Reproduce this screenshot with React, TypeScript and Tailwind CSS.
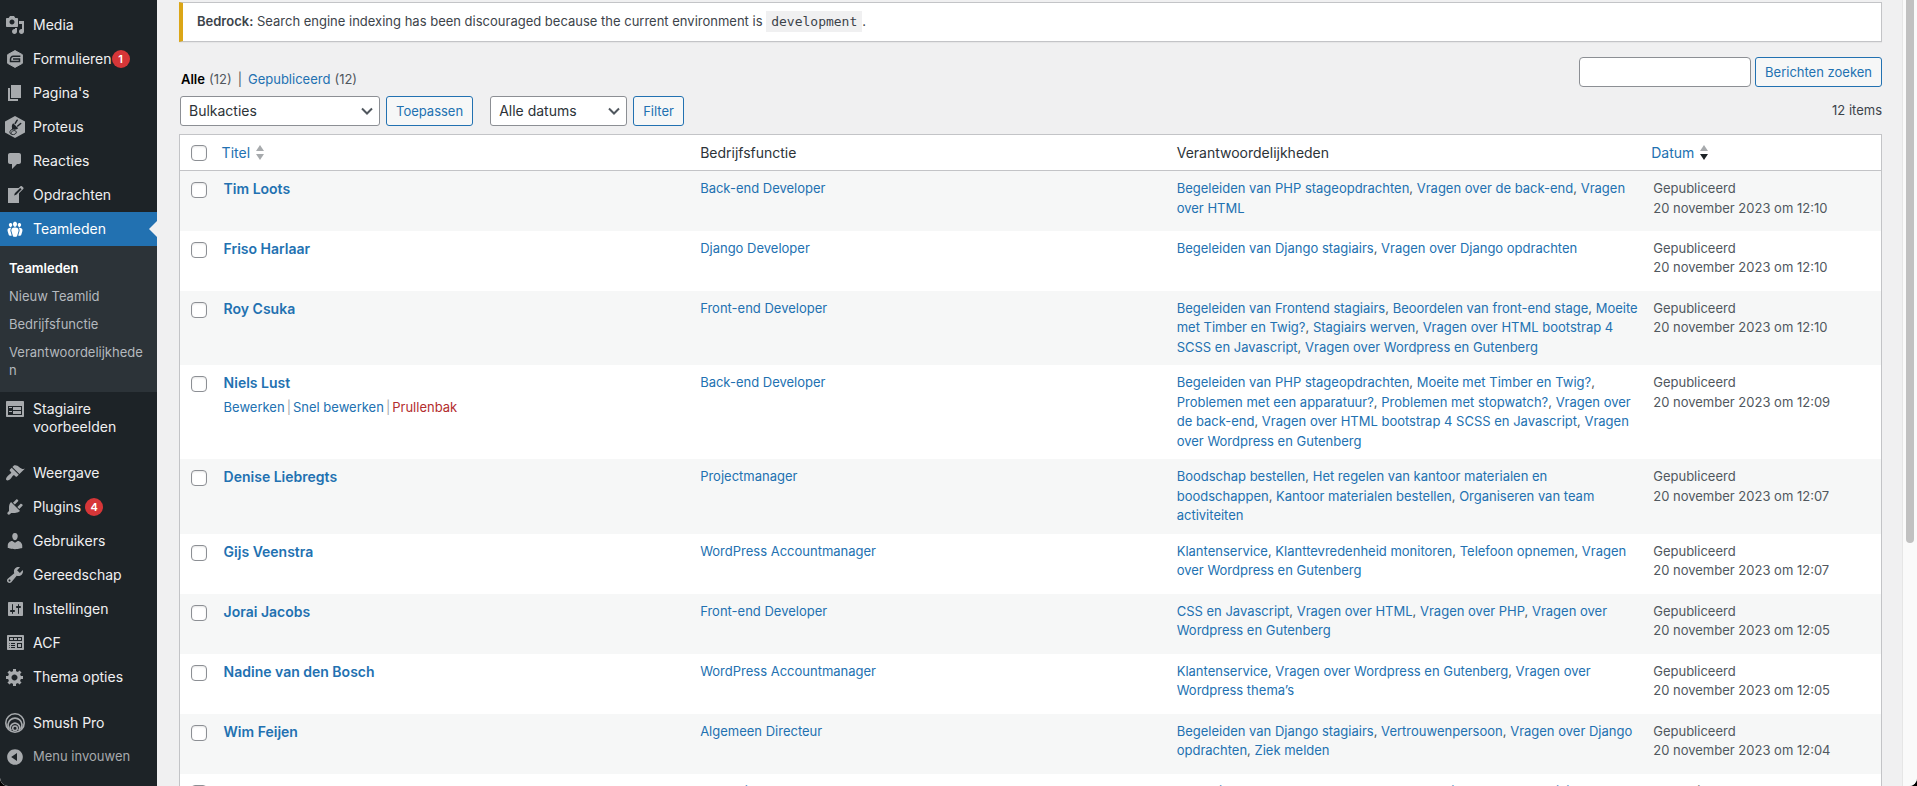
import type { ReactNode } from 'react';

const icons = {
  media:
    'M13 11V4c0-.55-.45-1-1-1h-1.67L9 1H5L3.67 3H2c-.55 0-1 .45-1 1v7c0 .55.45 1 1 1h10c.55 0 1-.45 1-1zM7 4.5c1.38 0 2.5 1.12 2.5 2.5S8.38 9.5 7 9.5 4.5 8.38 4.5 7 5.62 4.5 7 4.5zM14 6h5v10.5c0 1.38-1.12 2.5-2.5 2.5S14 17.88 14 16.5s1.12-2.5 2.5-2.5c.17 0 .34.02.5.05V9h-3V6zm-4 8.05V13h2v3.5c0 1.38-1.12 2.5-2.5 2.5S7 17.88 7 16.5 8.12 14 9.5 14c.17 0 .34.02.5.05z',
  page: 'M6 15V2h10v13H6zm-1 1h8v2H3V5h2v11z',
  comments:
    'M5 2h9c1.1 0 2 .9 2 2v7c0 1.1-.9 2-2 2h-2l-5 5v-5H5c-1.1 0-2-.9-2-2V4c0-1.1.9-2 2-2z',
  write:
    'M16.89 1.2l1.41 1.41c.39.39.39 1.02 0 1.41L14 8.33V18H3V3h10.67l1.8-1.8c.4-.39 1.03-.4 1.42 0zm-5.66 8.48l5.37-5.36-1.42-1.42-5.36 5.37-.71 2.12z',
  groups:
    'M8.03 4.46c-.29 1.28.55 3.46 1.97 3.46 1.41 0 2.25-2.18 1.96-3.46-.22-.98-1.08-1.63-1.96-1.63-.89 0-1.74.65-1.97 1.63zm-4.13.9c-.25 1.08.47 2.93 1.67 2.93s1.92-1.85 1.67-2.93c-.19-.83-.92-1.39-1.67-1.39s-1.48.56-1.67 1.39zm8.86 0c-.25 1.08.47 2.93 1.66 2.93 1.2 0 1.92-1.85 1.67-2.93-.19-.83-.92-1.39-1.67-1.39-.74 0-1.47.56-1.66 1.39zm-.59 11.43l1.25-4.3C14.2 10 12.71 8.47 10 8.47c-2.72 0-4.21 1.53-3.44 4.02l1.26 4.3C8.05 17.51 9 18 10 18c.98 0 1.94-.49 2.17-1.21zm-6.1-7.63c-.49.67-.96 1.83-.42 3.59l1.12 3.79c-.34.2-.77.31-1.2.31-.85 0-1.65-.41-1.85-1.03l-1.07-3.65c-.65-2.11.61-3.4 2.92-3.4.27 0 .54.02.79.06-.1.1-.2.22-.29.33zm8.35-.39c2.31 0 3.58 1.29 2.92 3.4l-1.07 3.65c-.2.62-1 1.03-1.85 1.03-.43 0-.86-.11-1.2-.31l1.11-3.77c.55-1.78.08-2.94-.42-3.61-.08-.11-.18-.23-.28-.33.25-.04.51-.06.79-.06z',
  feedback:
    'M2 2h16c.55 0 1 .45 1 1v14c0 .55-.45 1-1 1H2c-.55 0-1-.45-1-1V3c0-.55.45-1 1-1zm15 14V7H3v9h14zM4 8v1h3V8H4zm4 0v3h8V8H8zm-4 4v1h3v-1H4zm4 0v3h8v-3H8z',
  appearance:
    'M14.48 11.06L7.41 3.99l1.5-1.5c.5-.56 2.3-.47 3.51.32 1.21.8 1.43 1.28 2.91 2.1 1.18.64 2.45 1.26 4.45.85zm-.71.71L6.7 4.7 4.93 6.47c-.39.39-.39 1.02 0 1.41l1.06 1.06c.39.39.39 1.03 0 1.42-.6.6-1.43 1.11-2.21 1.69-.35.26-.7.53-1.01.84C1.43 14.23.4 16.08 1.4 17.07c.99 1 2.84-.03 4.18-1.36.31-.31.58-.66.85-1.02.57-.78 1.08-1.61 1.69-2.21.39-.39 1.02-.39 1.41 0l1.06 1.06c.39.39 1.02.39 1.41 0z',
  plugins:
    'M13.11 4.36L9.87 7.6 8 5.73l3.24-3.24c.35-.34 1.05-.2 1.56.32.52.51.66 1.21.31 1.55zm-8 1.77l.91-1.12 9.01 9.01-1.19.84c-.71.71-2.63 1.16-3.82 1.16H6.14L4.9 17.26c-.59.59-1.54.59-2.12 0-.59-.58-.59-1.53 0-2.12l1.24-1.24v-3.88c0-1.13.4-3.19 1.09-3.89zm7.26 3.97l3.24-3.24c.34-.35 1.04-.21 1.55.31.52.51.66 1.21.31 1.55l-3.24 3.25z',
  users:
    'M10 9.25c-2.27 0-2.73-3.44-2.73-3.44C7 4.02 7.82 2 9.97 2c2.16 0 2.98 2.02 2.71 3.81 0 0-.41 3.44-2.68 3.44zm0 2.57L12.72 10c2.39 0 4.52 2.33 4.52 4.53v2.49s-3.65 1.13-7.24 1.13c-3.65 0-7.24-1.13-7.24-1.13v-2.49c0-2.25 1.94-4.48 4.47-4.48z',
  tools:
    'M16.68 9.77c-1.34 1.34-3.3 1.67-4.95.99l-5.41 6.52c-.99.99-2.59.99-3.58 0s-.99-2.59 0-3.57l6.52-5.42c-.68-1.65-.35-3.61.99-4.95 1.28-1.28 3.12-1.62 4.72-1.06l-2.89 2.89 2.82 2.82 2.86-2.87c.53 1.58.18 3.39-1.08 4.65zM3.81 16.21c.4.39 1.04.39 1.43 0 .4-.4.4-1.04 0-1.43-.39-.4-1.03-.4-1.43 0-.39.39-.39 1.03 0 1.43z',
  settings:
    'M18 16V4c0-.55-.45-1-1-1H4c-.55 0-1 .45-1 1v12c0 .55.45 1 1 1h13c.55 0 1-.45 1-1zM8 11h1c.55 0 1 .45 1 1s-.45 1-1 1H8v1.5c0 .28-.22.5-.5.5s-.5-.22-.5-.5V13H6c-.55 0-1-.45-1-1s.45-1 1-1h1V5.5c0-.28.22-.5.5-.5s.5.22.5.5V11zm5-2h-1c-.55 0-1-.45-1-1s.45-1 1-1h1V5.5c0-.28.22-.5.5-.5s.5.22.5.5V7h1c.55 0 1 .45 1 1s-.45 1-1 1h-1v5.5c0 .28-.22.5-.5.5s-.5-.22-.5-.5V9z',
  widgets:
    'M19 16V3c0-.55-.45-1-1-1H3c-.55 0-1 .45-1 1v13c0 .55.45 1 1 1h15c.55 0 1-.45 1-1zM4 4h13v4H4V4zm1 1v2h3V5H5zm4 0v2h3V5H9zm4 0v2h3V5h-3zm-8.5 5c.28 0 .5.22.5.5s-.22.5-.5.5-.5-.22-.5-.5.22-.5.5-.5zM6 10h4v1H6v-1zm6 0h5v5h-5v-5zm-7.5 2c.28 0 .5.22.5.5s-.22.5-.5.5-.5-.22-.5-.5.22-.5.5-.5zM6 12h4v1H6v-1zm7-1v3h3v-3h-3zm-8.5 3c.28 0 .5.22.5.5s-.22.5-.5.5-.5-.22-.5-.5.22-.5.5-.5zM6 14h4v1H6v-1z',
  generic:
    'M18 12h-2.18c-.17.7-.44 1.35-.81 1.93l1.54 1.54-2.1 2.1-1.54-1.54c-.58.36-1.23.63-1.91.79V19H8v-2.18c-.68-.16-1.33-.43-1.91-.79l-1.54 1.54-2.12-2.12 1.54-1.54c-.36-.58-.63-1.23-.79-1.91H1V9.03h2.17c.16-.7.44-1.35.8-1.94L2.43 5.55l2.1-2.1 1.54 1.54c.58-.37 1.24-.64 1.93-.81V2h3v2.18c.68.16 1.33.43 1.91.79l1.54-1.54 2.12 2.12-1.54 1.54c.36.59.64 1.24.8 1.94H18V12zm-8.5 1.5c1.66 0 3-1.34 3-3s-1.34-3-3-3-3 1.34-3 3 1.34 3 3 3z',
  collapse:
    'M10 2.16c4.33 0 7.84 3.51 7.84 7.84s-3.51 7.84-7.84 7.84S2.16 14.33 2.16 10 5.67 2.16 10 2.16zm2 11.72V6.12L6.18 9.97z',
};

function Icon({ path }: { path: string }) {
  return (
    <svg viewBox="0 0 20 20" className="size-5 shrink-0" fill="currentColor" fillRule="evenodd" aria-hidden="true">
      <path d={path} />
    </svg>
  );
}

function FormsIcon() {
  return (
    <svg viewBox="0 0 20 20" className="size-5 shrink-0" fill="none" aria-hidden="true">
      <path d="M10 1.6l7.4 4.1v8.6L10 18.4l-7.4-4.1V5.7z" fill="#a7aaad" stroke="#a7aaad" strokeLinejoin="round" />
      <path d="M15.4 7.3H8.4c-1.9 0-2.9 1.3-2.9 3.1v2.2h9V10H8" stroke="#1d2327" strokeWidth="1.5" />
    </svg>
  );
}

function ProteusIcon() {
  return (
    <svg viewBox="0 0 20 22" className="h-[22px] w-5 shrink-0" fill="none" aria-hidden="true">
      <path d="M10 0l10 5.6v10.8L10 22 0 16.4V5.6z" fill="#a7aaad" />
      <path d="M8.2 7.2l5 5-1.5 1c-1 .5-2.2.6-3.2.2l-1.7.5.3-1.8c-.6-1.5-.2-3.6 1.1-4.9z" fill="#1d2327" />
      <path d="M10.2 7.4l2-3.2M12.7 10l3-2.5" stroke="#1d2327" strokeWidth="1.5" strokeLinecap="round" />
      <path d="M7 13.5c-2.2.8-2.7 3.1-1.5 4.3 1.3 1.2 4.8 1.1 5.7-.8.6-1.6-.8-2.7-2.4-2.4-1.5.2-3.3 1.7-2.5 3.2" stroke="#1d2327" strokeWidth="0.9" />
    </svg>
  );
}

function SmushIcon() {
  return (
    <svg viewBox="0 0 20 20" className="size-5 shrink-0" fill="none" stroke="#a7aaad" aria-hidden="true">
      <circle cx="10" cy="10" r="9.2" strokeWidth="1.6" />
      <path d="M4.3 16.2a7 7 0 1 1 11.4 0" strokeWidth="1.7" />
      <path d="M6.3 17.6a4.6 4.6 0 1 1 7.4 0" strokeWidth="1.7" />
      <circle cx="10" cy="15.3" r="2.3" strokeWidth="1.5" />
    </svg>
  );
}

function MenuItem({ icon, children, badge, active }: { icon: ReactNode; children: ReactNode; badge?: string; active?: boolean }) {
  return (
    <a
      href="#"
      className={
        active
          ? 'relative flex min-h-[34px] items-start gap-2 bg-[#2271b1] pl-[5px] text-white'
          : 'relative flex min-h-[34px] items-start gap-2 pl-[5px] text-[#f0f0f1]'
      }
    >
      <span className={active ? 'flex h-[34px] w-5 items-center text-white' : 'flex h-[34px] w-5 items-center text-[#a7aaad]'}>{icon}</span>
      <span className="py-2 text-sm leading-[18px]">{children}</span>
      {badge && (
        <span className="-ml-2 mt-2 flex size-[18px] items-center justify-center rounded-full bg-[#d63638] text-[11px] font-semibold text-white">
          {badge}
        </span>
      )}
      {active && <span className="absolute top-[9px] right-0 border-y-8 border-r-8 border-y-transparent border-r-[#f0f0f1]" />}
    </a>
  );
}

function Sidebar() {
  return (
    <nav className="w-[157px] shrink-0 rounded-bl-lg bg-[#1d2327] pt-2">
      <MenuItem icon={<Icon path={icons.media} />}>Media</MenuItem>
      <MenuItem icon={<FormsIcon />} badge="1">Formulieren</MenuItem>
      <MenuItem icon={<Icon path={icons.page} />}>Pagina's</MenuItem>
      <MenuItem icon={<ProteusIcon />}>Proteus</MenuItem>
      <MenuItem icon={<Icon path={icons.comments} />}>Reacties</MenuItem>
      <MenuItem icon={<Icon path={icons.write} />}>Opdrachten</MenuItem>
      <MenuItem icon={<Icon path={icons.groups} />} active>Teamleden</MenuItem>
      <ul className="bg-[#2c3338] px-[9px] py-2 text-[13px] leading-[18px] text-[#b4b9be]">
        <li className="py-[5px] font-semibold text-white"><a href="#">Teamleden</a></li>
        <li className="py-[5px]"><a href="#">Nieuw Teamlid</a></li>
        <li className="py-[5px]"><a href="#">Bedrijfsfunctie</a></li>
        <li className="py-[5px]"><a href="#" className="block break-all">Verantwoordelijkheden</a></li>
      </ul>
      <MenuItem icon={<Icon path={icons.feedback} />}>Stagiaire voorbeelden</MenuItem>
      <div className="h-3" />
      <MenuItem icon={<Icon path={icons.appearance} />}>Weergave</MenuItem>
      <MenuItem icon={<Icon path={icons.plugins} />} badge="4">{'Plugins\u00a0'}</MenuItem>
      <MenuItem icon={<Icon path={icons.users} />}>Gebruikers</MenuItem>
      <MenuItem icon={<Icon path={icons.tools} />}>Gereedschap</MenuItem>
      <MenuItem icon={<Icon path={icons.settings} />}>Instellingen</MenuItem>
      <MenuItem icon={<Icon path={icons.widgets} />}>ACF</MenuItem>
      <MenuItem icon={<Icon path={icons.generic} />}>Thema opties</MenuItem>
      <div className="h-3" />
      <MenuItem icon={<SmushIcon />}>Smush Pro</MenuItem>
      <button type="button" className="flex h-[34px] w-full items-center gap-2 pl-[5px] text-left text-[13px] text-[#a7aaad]">
        <Icon path={icons.collapse} />
        Menu invouwen
      </button>
    </nav>
  );
}

interface Member {
  name: string;
  role: string;
  tasks: string[];
  time: string;
  actions?: boolean;
}

const members: Member[] = [
  { name: 'Tim Loots', role: 'Back-end Developer', tasks: ['Begeleiden van PHP stageopdrachten', 'Vragen over de back-end', 'Vragen over HTML'], time: '12:10' },
  { name: 'Friso Harlaar', role: 'Django Developer', tasks: ['Begeleiden van Django stagiairs', 'Vragen over Django opdrachten'], time: '12:10' },
  { name: 'Roy Csuka', role: 'Front-end Developer', tasks: ['Begeleiden van Frontend stagiairs', 'Beoordelen van front-end stage', 'Moeite met Timber en Twig?', 'Stagiairs werven', 'Vragen over HTML bootstrap 4 SCSS en Javascript', 'Vragen over Wordpress en Gutenberg'], time: '12:10' },
  { name: 'Niels Lust', role: 'Back-end Developer', tasks: ['Begeleiden van PHP stageopdrachten', 'Moeite met Timber en Twig?', 'Problemen met een apparatuur?', 'Problemen met stopwatch?', 'Vragen over de back-end', 'Vragen over HTML bootstrap 4 SCSS en Javascript', 'Vragen over Wordpress en Gutenberg'], time: '12:09', actions: true },
  { name: 'Denise Liebregts', role: 'Projectmanager', tasks: ['Boodschap bestellen', 'Het regelen van kantoor materialen en boodschappen', 'Kantoor materialen bestellen', 'Organiseren van team activiteiten'], time: '12:07' },
  { name: 'Gijs Veenstra', role: 'WordPress Accountmanager', tasks: ['Klantenservice', 'Klanttevredenheid monitoren', 'Telefoon opnemen', 'Vragen over Wordpress en Gutenberg'], time: '12:07' },
  { name: 'Jorai Jacobs', role: 'Front-end Developer', tasks: ['CSS en Javascript', 'Vragen over HTML', 'Vragen over PHP', 'Vragen over Wordpress en Gutenberg'], time: '12:05' },
  { name: 'Nadine van den Bosch', role: 'WordPress Accountmanager', tasks: ['Klantenservice', 'Vragen over Wordpress en Gutenberg', 'Vragen over Wordpress thema’s'], time: '12:05' },
  { name: 'Wim Feijen', role: 'Algemeen Directeur', tasks: ['Begeleiden van Django stagiairs', 'Vertrouwenpersoon', 'Vragen over Django opdrachten', 'Ziek melden'], time: '12:04' },
  { name: 'Kelly Vermond', role: 'UX designer', tasks: ['Begeleiden van UX stageopdrachten', 'Begeleiden van UX stagiairs'], time: '12:04' },
];

const linkColor = 'text-[#2271b1]';

function Check({ label }: { label: string }) {
  return (
    <input
      type="checkbox"
      aria-label={label}
      className="block size-4 appearance-none rounded-[4px] border border-[#8c8f94] bg-white shadow-[inset_0_1px_2px_rgba(0,0,0,0.1)]"
    />
  );
}

function SortMarks({ descending }: { descending?: boolean }) {
  return (
    <svg viewBox="0 0 8 15" className="h-[15px] w-2" aria-hidden="true">
      <path d="M4 0l4 6H0z" fill="#a7aaad" />
      <path d="M4 15L0 9h8z" fill={descending ? '#1d2327' : '#a7aaad'} />
    </svg>
  );
}

function MemberTable() {
  return (
    <table className="mt-2 w-full table-fixed border-collapse border border-[#c3c4c7] bg-white">
      <colgroup>
        <col className="w-[34px]" />
        <col className="w-[28%]" />
        <col className="w-[28%]" />
        <col className="w-[28%]" />
        <col className="w-[14%]" />
      </colgroup>
      <thead className="text-left text-sm leading-5 text-[#2c3338]">
        <tr className="h-9 border-b border-[#c3c4c7]">
          <th className="pl-[11px] font-normal"><Check label="Alles selecteren" /></th>
          <th className="px-2 font-normal">
            <a href="#" className="flex items-center gap-1.5 text-[#2271b1]">Titel <SortMarks /></a>
          </th>
          <th className="px-2.5 font-normal">Bedrijfsfunctie</th>
          <th className="px-2.5 font-normal">Verantwoordelijkheden</th>
          <th className="px-2 font-normal">
            <a href="#" className="flex items-center gap-1.5 text-[#2271b1]">Datum <SortMarks descending /></a>
          </th>
        </tr>
      </thead>
      <tbody className="align-top text-[13px] leading-normal text-[#50575e]">
        {members.map((m) => (
          <tr key={m.name} className="h-[60px] odd:bg-[#f6f7f7]">
            <td className="pt-[11px] pl-[11px]"><Check label={`${m.name} selecteren`} /></td>
            <td className="px-2.5 py-2">
              <a href="#" className="block text-sm leading-5 font-semibold text-[#2271b1]">{m.name}</a>
              {m.actions && (
                <div className="mt-[5px] flex gap-0.5 text-[#a7aaad]">
                  <a href="#" className={linkColor}>Bewerken</a>|
                  <button type="button" className={linkColor}>Snel bewerken</button>|
                  <a href="#" className="text-[#b32d2e]">Prullenbak</a>
                </div>
              )}
            </td>
            <td className="px-2.5 py-2"><a href="#" className={linkColor}>{m.role}</a></td>
            <td className="py-2 pl-2.5">
              {m.tasks.map((t, i) => (
                <span key={t}>
                  {i > 0 && ', '}
                  <a href="#" className={linkColor}>{t}</a>
                </span>
              ))}
            </td>
            <td className="px-2.5 py-2">
              Gepubliceerd
              <br />
              20 november 2023 om {m.time}
            </td>
          </tr>
        ))}
      </tbody>
    </table>
  );
}

const buttonClass = 'h-[30px] rounded-[3px] border border-[#2271b1] bg-[#f6f7f7] px-[9px] pt-px text-[13px] text-[#2271b1]';

function Dropdown({ label, value, className }: { label: string; value: string; className: string }) {
  return (
    <div className={`relative ${className}`}>
      <select aria-label={label} className="h-[30px] w-full appearance-none rounded-[3px] border border-[#8c8f94] bg-white pr-6 pl-2 text-sm text-[#2c3338]">
        <option>{value}</option>
      </select>
      <svg viewBox="0 0 12 8" className="pointer-events-none absolute top-[11px] right-[7px] h-2 w-3" fill="none" stroke="#50575e" strokeWidth="2" aria-hidden="true">
        <path d="M1 1.5l5 5 5-5" />
      </svg>
    </div>
  );
}

export default function App() {
  return (
    <div className="h-screen bg-black font-['Inter','Liberation_Sans',sans-serif] text-[13px] text-[#3c434a]">
      <div className="flex h-full overflow-hidden rounded-b-lg bg-[#f0f0f1]">
        <Sidebar />
        <main className="min-w-0 flex-1 pt-0.5 pr-5 pl-[22px]">
          <div className="flex h-10 items-center border border-l-4 border-[#c3c4c7] border-l-[#dba617] bg-white px-3.5 shadow-[0_1px_1px_rgba(0,0,0,0.04)]">
            <p>
              <strong className="font-semibold">Bedrock:</strong> Search engine indexing has been discouraged because the current environment is{' '}
              <code className="bg-[#f0f0f1] px-[5px] py-[3px] font-['DejaVu_Sans_Mono','Liberation_Mono',monospace]">development</code>.
            </p>
          </div>
          <div className="mt-[15px] flex items-start justify-between">
            <p className="mt-3 ml-0.5 flex gap-1 leading-5 text-[#50575e]">
              <a href="#" className="font-semibold text-black">Alle</a> (12)
              <span className="mx-0.5">|</span>
              <a href="#" className={linkColor}>Gepubliceerd</a> (12)
            </p>
            <form className="flex gap-1" onSubmit={(e) => e.preventDefault()}>
              <input type="search" aria-label="Berichten zoeken" className="h-[30px] w-[172px] rounded-[4px] border border-[#8c8f94] bg-white px-2" />
              <button type="submit" className={buttonClass}>Berichten zoeken</button>
            </form>
          </div>
          <div className="mt-[7px] flex items-center pl-px">
            <Dropdown label="Selecteer bulkactie" value="Bulkacties" className="w-[200px]" />
            <button type="button" className={`ml-1.5 ${buttonClass}`}>Toepassen</button>
            <Dropdown label="Filter op datum" value="Alle datums" className="ml-[17px] w-[137px]" />
            <button type="button" className={`ml-1.5 ${buttonClass}`}>Filter</button>
            <span className="ml-auto">12 items</span>
          </div>
          <MemberTable />
        </main>
        <div className="w-[15px] shrink-0 border-l border-[#e6e6e6] bg-[#fafafa] px-[3px]" aria-hidden="true">
          <div className="-mt-2 h-[551px] rounded-full bg-[#c1c1c1]" />
        </div>
      </div>
    </div>
  );
}
